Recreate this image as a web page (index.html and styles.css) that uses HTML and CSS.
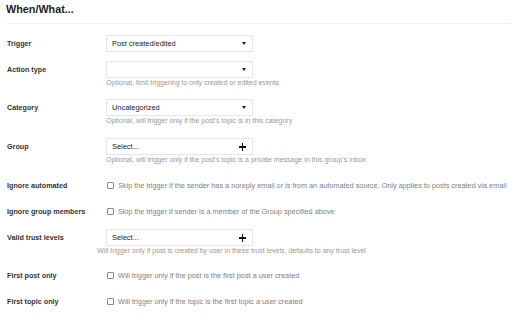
FILE: index.html
```html
<!DOCTYPE html>
<html lang="en">
  <head>
    <meta charset="UTF-8" />
    <meta name="viewport" content="width=device-width, initial-scale=1.0" />
    <title>When/What...</title>
    <link rel="stylesheet" href="styles.css">
  </head>
  <body>
    <div class="container">
      <h2 class="title">When/What...</h2>

      <div class="form">
        <div class="row">
          <label class="label">Trigger</label>
          <div class="control">
            <div class="select">
              <span>Post created/edited</span>
              <span class="caret"></span>
            </div>
          </div>
        </div>

        <div class="row">
          <label class="label">Action type</label>
          <div class="control">
            <div class="select">
              <span></span>
              <span class="caret"></span>
            </div>
            <div class="help">Optional, limit triggering to only created or edited events</div>
          </div>
        </div>

        <div class="row row-category">
          <label class="label">Category</label>
          <div class="control">
            <div class="select">
              <span>Uncategorized</span>
              <span class="caret"></span>
            </div>
            <div class="help">Optional, will trigger only if the post's topic is in this category</div>
          </div>
        </div>

        <div class="row row-group">
          <label class="label">Group</label>
          <div class="control">
            <div class="select">
              <span>Select...</span>
              <span class="plus"></span>
            </div>
            <div class="help">Optional, will trigger only if the post's topic is a private message in this group's inbox</div>
          </div>
        </div>

        <div class="row">
          <label class="label">Ignore automated</label>
          <div class="control">
            <label class="check"><span class="box"></span>Skip the trigger if the sender has a noreply email or is from an automated source. Only applies to posts created via email</label>
          </div>
        </div>

        <div class="row">
          <label class="label">Ignore group members</label>
          <div class="control">
            <label class="check"><span class="box"></span>Skip the trigger if sender is a member of the Group specified above</label>
          </div>
        </div>

        <div class="row">
          <label class="label">Valid trust levels</label>
          <div class="control">
            <div class="select">
              <span>Select...</span>
              <span class="plus"></span>
            </div>
            <div class="help help-wide">Will trigger only if post is created by user in these trust levels, defaults to any trust level</div>
          </div>
        </div>

        <div class="row">
          <label class="label">First post only</label>
          <div class="control">
            <label class="check"><span class="box"></span>Will trigger only if the post is the first post a user created</label>
          </div>
        </div>

        <div class="row">
          <label class="label">First topic only</label>
          <div class="control">
            <label class="check"><span class="box"></span>Will trigger only if the topic is the first topic a user created</label>
          </div>
        </div>
      </div>
    </div>
  </body>
</html>
```

FILE: styles.css
```css
body {
  font-family: 'Liberation Sans', Arial, Helvetica, sans-serif;
  background-color: #fff;
  margin: 0;
  color: #222;
}
.container {
  padding: 0 6px;
}
.title {
  font-size: 10.8px;
  font-weight: bold;
  color: #222;
  margin: 0;
  padding: 1px 0 0;
  line-height: 16px;
  height: 22px;
  border-bottom: 1px solid #f0f0f0;
}
.form {
  padding-top: 11px;
}
.row {
  display: grid;
  grid-template-columns: 100px 1fr;
  align-items: start;
  margin-bottom: 9px;
}
.row-category {
  margin-bottom: 10px;
}
.row-group {
  margin-bottom: 10px;
}
.label {
  font-size: 7.2px;
  font-weight: bold;
  color: #333;
  line-height: 17px;
  padding-left: 1px;
}
.control {
  min-width: 0;
}
.select {
  box-sizing: border-box;
  width: 147px;
  height: 17px;
  border: 1px solid #e6e6e6;
  background-color: #fff;
  display: flex;
  align-items: center;
  justify-content: space-between;
  padding: 0 6px 0 5px;
  font-size: 7.4px;
  color: #222;
}
.caret {
  width: 0;
  height: 0;
  border-left: 2.5px solid transparent;
  border-right: 2.5px solid transparent;
  border-top: 3px solid #222;
}
.plus {
  position: relative;
  width: 7px;
  height: 7px;
}
.plus::before,
.plus::after {
  content: '';
  position: absolute;
  background-color: #111;
}
.plus::before {
  left: 0;
  top: 3px;
  width: 7px;
  height: 1.5px;
}
.plus::after {
  left: 2.75px;
  top: 0;
  width: 1.5px;
  height: 7.5px;
}
.help {
  font-size: 7px;
  color: #999;
  line-height: 10px;
  padding-bottom: 2px;
  white-space: nowrap;
}
.help-wide {
  margin-left: -9px;
}
.check {
  display: flex;
  align-items: center;
  font-size: 7.3px;
  color: #808080;
  line-height: 17px;
  white-space: nowrap;
}
.box {
  box-sizing: border-box;
  width: 7px;
  height: 7px;
  border: 1px solid #8a8a8a;
  border-radius: 1px;
  margin: 0 4px 0 1px;
  flex-shrink: 0;
}
```
